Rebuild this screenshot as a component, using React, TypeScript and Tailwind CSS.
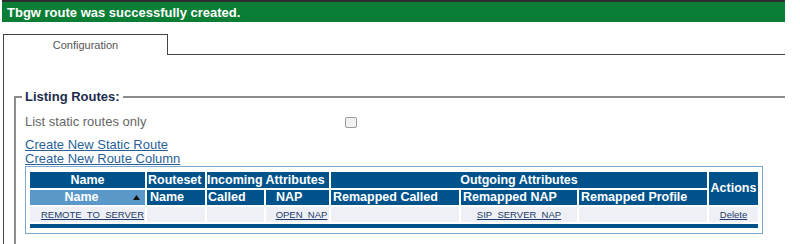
import React from 'react';

const headDark = 'bg-[#00528b] text-white font-bold text-[12.5px] leading-[15px] p-0 whitespace-nowrap';
const cellBody = 'p-0 text-[9.5px] leading-[15px] whitespace-nowrap';
const cellLink = 'text-[#1d3b6b] underline';

function SortArrow() {
  return (
    <svg width="7" height="5" viewBox="0 0 7 5" className="shrink-0 mr-[5px]">
      <polygon points="3.5,0 7,5 0,5" fill="#111" />
    </svg>
  );
}

export default function App() {
  return (
    <div className="w-[800px] h-[244px] overflow-hidden bg-white font-['Liberation_Sans',Arial,sans-serif]">
      {/* success banner */}
      <div className="ml-[2px] w-[783px] h-[22px] border-t-2 border-[#2e2e2e] bg-[#0b7e36] flex items-center pl-[5px]">
        <span className="text-white font-bold text-[13px] leading-[15px] mt-[1px]">Tbgw route was successfully created.</span>
      </div>

      {/* tabs */}
      <div className="ml-[3px] w-[782px] mt-[12px] flex">
        <div className="w-[165px] h-[21px] border-l border-t border-r border-[#444] text-center text-[11px] leading-[13px] text-[#555] pt-[4px]">
          Configuration
        </div>
        <div className="flex-1 h-[21px] border-b border-[#444]" />
      </div>

      <div className="ml-[3px] w-[782px] h-[200px] border-l border-[#444] pl-[10px] pt-[34px]">
        <fieldset className="border-t-2 border-l-2 border-[#8c8c8c] pl-[6px] pr-[9px] pb-4">
          <legend className="px-[3px] text-[13px] leading-[15px] font-bold text-[#1c2b4d]">Listing Routes:</legend>

          <div className="ml-[3px] mt-[11px] flex items-center h-[14px]">
            <span className="w-[320px] text-[13px] leading-[14px] text-[#666]">List static routes only</span>
            <div className="w-[12px] h-[11px] rounded-[2px] border border-[#9a9a9a] bg-[#f1f1f1]" />
          </div>

          <div className="ml-[3px] mt-[9px] flex flex-col items-start text-[13px] leading-[14px] text-[#2a5f98]">
            <a className="underline">Create New Static Route</a>
            <a className="underline">Create New Route Column</a>
          </div>

          <div className="ml-[3px] w-[738px] border border-[#7ba7cf] pt-[3px] px-[2px] pb-[3px]">
            <table className="w-[732px] table-fixed border-separate border-spacing-[2px]">
              <colgroup>
                <col className="w-[115px]" />
                <col className="w-[58px]" />
                <col className="w-[57px]" />
                <col className="w-[63px]" />
                <col className="w-[128px]" />
                <col className="w-[116px]" />
                <col className="w-[128px]" />
                <col className="w-[49px]" />
              </colgroup>
              <thead>
                <tr className="h-[16px]">
                  <th className={`${headDark} text-center`}>Name</th>
                  <th className={`${headDark} text-left pl-[1px]`}>Routeset</th>
                  <th colSpan={2} className={`${headDark} text-left`}>Incoming Attributes</th>
                  <th colSpan={3} className={`${headDark} text-center`}>Outgoing Attributes</th>
                  <th rowSpan={2} className={`${headDark} text-center`}>Actions</th>
                </tr>
                <tr className="h-[15px]">
                  <th className="bg-[#5a98c9] text-white font-bold text-[12.5px] leading-[15px] p-0">
                    <div className="flex items-center">
                      <span className="flex-1 text-center">Name</span>
                      <SortArrow />
                    </div>
                  </th>
                  <th className={`${headDark} text-left pl-[3px]`}>Name</th>
                  <th className={`${headDark} text-left pl-[1px]`}>Called</th>
                  <th className={`${headDark} text-left pl-[10px]`}>NAP</th>
                  <th className={`${headDark} text-left pl-[2px]`}>Remapped Called</th>
                  <th className={`${headDark} text-left pl-[2px]`}>Remapped NAP</th>
                  <th className={`${headDark} text-left pl-[2px]`}>Remapped Profile</th>
                </tr>
              </thead>
              <tbody>
                <tr className="h-[15px] bg-[#eef0f5]">
                  <td className={`${cellBody} text-center pl-[10px]`}><a className={cellLink}>REMOTE_TO_SERVER</a></td>
                  <td className={cellBody} />
                  <td className={cellBody} />
                  <td className={`${cellBody} text-center pl-[8px]`}><a className={cellLink}>OPEN_NAP</a></td>
                  <td className={cellBody} />
                  <td className={`${cellBody} text-center`}><a className={cellLink}>SIP_SERVER_NAP</a></td>
                  <td className={cellBody} />
                  <td className={`${cellBody} text-center`}><a className={cellLink}>Delete</a></td>
                </tr>
                <tr className="h-[4px]">
                  <td colSpan={8} className="p-0 h-[4px] leading-[0px] bg-[#00528b]" />
                </tr>
              </tbody>
            </table>
          </div>
        </fieldset>
      </div>
    </div>
  );
}
